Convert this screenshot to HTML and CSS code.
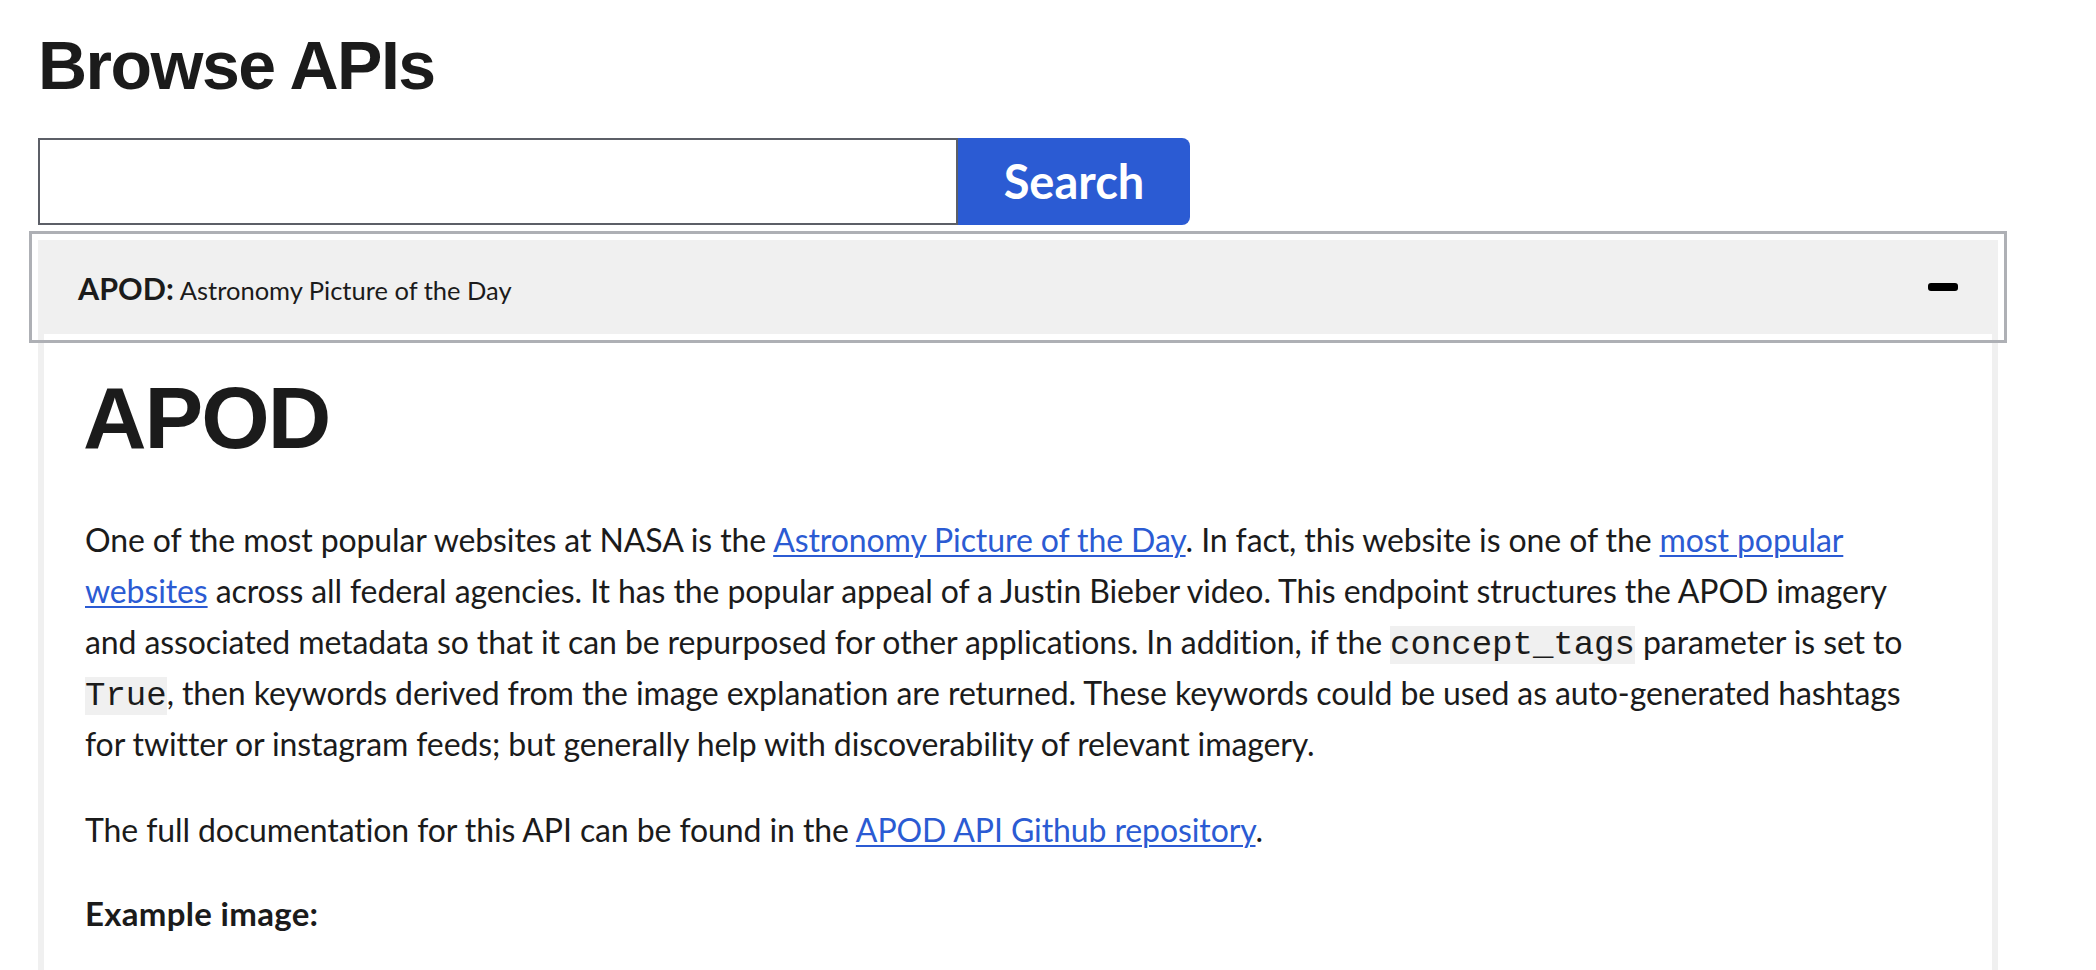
FILE: index.html
```html
<!DOCTYPE html>
<html lang="en">
<head>
<meta charset="utf-8">
<title>Browse APIs</title>
<link rel="stylesheet" href="styles.css">
</head>
<body>
<main class="page">
  <h1 class="page-title">Browse APIs</h1>
  <form class="search" role="search">
    <input class="search-input" type="search" aria-label="Search">
    <button class="search-button" type="button">Search</button>
  </form>
  <div class="accordion">
    <button class="accordion-button" type="button" aria-expanded="true">
      <span class="accordion-title"><strong class="accordion-name">APOD:</strong> <span class="accordion-desc">Astronomy Picture of the Day</span></span>
      <svg class="accordion-icon" width="30" height="8" viewBox="0 0 30 8" aria-hidden="true"><rect x="0" y="0" width="30" height="8" rx="3" fill="#000"/></svg>
    </button>
    <div class="accordion-content">
      <h2 class="api-title">APOD</h2>
      <p class="text">One of the most popular websites at NASA is the <a href="#">Astronomy Picture of the Day</a>. In fact, this website is one of the <a href="#">most popular websites</a> across all federal agencies. It has the popular appeal of a Justin Bieber video. This endpoint structures the APOD imagery and associated metadata so that it can be repurposed for other applications. In addition, if the <code>concept_tags</code> parameter is set to <code>True</code>, then keywords derived from the image explanation are returned. These keywords could be used as auto-generated hashtags for twitter or instagram feeds; but generally help with discoverability of relevant imagery.</p>
      <p class="text">The full documentation for this API can be found in the <a href="#">APOD API Github repository</a>.</p>
      <p class="text"><strong>Example image:</strong></p>
    </div>
  </div>
</main>
</body>
</html>
```

FILE: styles.css
```css
html, body {
  margin: 0;
  padding: 0;
  background: #ffffff;
}
body {
  font-family: Lato, "Noto Sans", sans-serif;
  color: #1b1b1b;
  overflow: hidden;
}
.page {
  width: 1960px;
  padding: 31px 0 0 38px;
}
.page-title {
  font-family: "Liberation Sans", Arial, sans-serif;
  font-weight: 700;
  font-size: 68px;
  line-height: 68px;
  letter-spacing: -1.5px;
  margin: 0 0 39px 0;
  color: #1b1b1b;
}
.search {
  display: flex;
  height: 87px;
  margin: 0 0 15px 0;
}
.search-input {
  box-sizing: border-box;
  width: 920px;
  height: 87px;
  border: 2px solid #5c5f67;
  border-radius: 0;
  margin: 0;
  padding: 0 16px;
  font-family: Lato, sans-serif;
  font-size: 32px;
  background: #fff;
  outline: none;
}
.search-button {
  box-sizing: border-box;
  width: 232px;
  height: 87px;
  margin: 0;
  border: 0;
  border-radius: 0 8px 8px 0;
  background: #2b5bd3;
  color: #ffffff;
  font-family: Lato, sans-serif;
  font-weight: 700;
  font-size: 47px;
  padding: 0 0 2px 0;
}
.accordion {
  width: 1960px;
}
.accordion-button {
  box-sizing: border-box;
  width: 100%;
  height: 94px;
  display: flex;
  align-items: center;
  justify-content: space-between;
  padding: 0 40px;
  margin: 0;
  border: 0;
  background: #f0f0f0;
  color: #1b1b1b;
  font-family: Lato, sans-serif;
  text-align: left;
  outline: 3px solid #aeb0b5;
  outline-offset: 6px;
}
.accordion-title {
  display: flex;
  align-items: baseline;
  gap: 6px;
  padding-top: 2px;
}
.accordion-name {
  font-weight: 700;
  font-size: 30.5px;
}
.accordion-desc {
  font-weight: 400;
  font-size: 25.5px;
}
.accordion-icon {
  display: block;
}
.accordion-content {
  box-sizing: border-box;
  border-left: 6px solid #f0f0f0;
  border-right: 6px solid #f0f0f0;
  padding: 40px 52px 0 41px;
  height: 700px;
}
.api-title {
  font-family: "Liberation Sans", Arial, sans-serif;
  font-weight: 700;
  font-size: 88px;
  line-height: 88px;
  letter-spacing: -2px;
  margin: 0 0 52px -2px;
  color: #1b1b1b;
}
.text {
  font-size: 32px;
  letter-spacing: -0.1px;
  line-height: 51px;
  margin: 0 0 35px 0;
}
.text + .text + .text {
  margin-top: -2px;
}
.text a {
  color: #2b5bd3;
  text-decoration: underline;
  text-decoration-thickness: 2px;
  text-underline-offset: 3px;
}
.text code {
  font-family: "Liberation Mono", "Courier New", monospace;
  font-size: 34px;
  letter-spacing: 0;
  line-height: 1;
  background: #f0f0f0;
  color: #1b1b1b;
}
.text strong {
  font-weight: 700;
  font-size: 33px;
  letter-spacing: 0.3px;
}
```
